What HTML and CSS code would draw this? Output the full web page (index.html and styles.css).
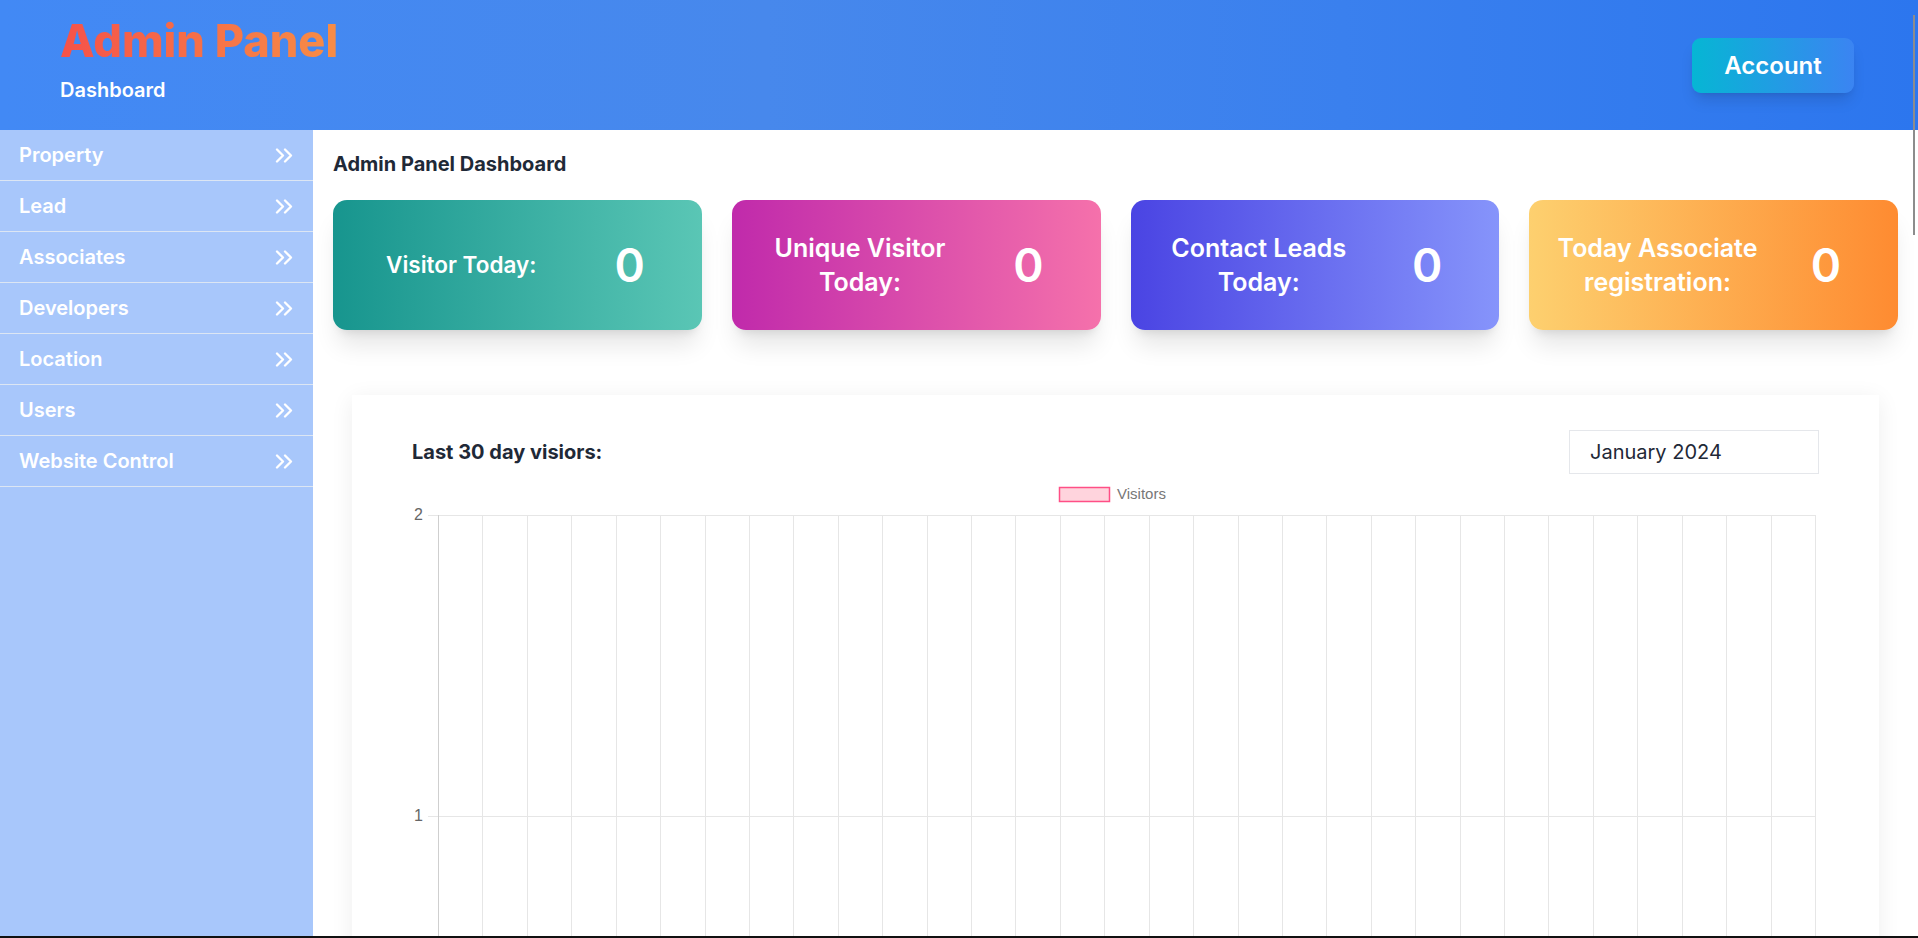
FILE: index.html
```html
<!DOCTYPE html>
<html lang="en">
<head>
<meta charset="utf-8">
<title>Admin Panel</title>
<link rel="stylesheet" href="styles.css">
</head>
<body>
<header class="topbar">
  <div class="brand">
    <h1 class="brand-title">Admin Panel</h1>
    <p class="brand-sub">Dashboard</p>
  </div>
  <button class="account-btn">Account</button>
</header>
<div class="layout">
  <nav class="sidebar">
    <a class="nav-item"><span>Property</span><svg class="chev" viewBox="0 0 18 15"><path d="M2 1.5l6 6-6 6M10 1.5l6 6-6 6"/></svg></a>
    <a class="nav-item"><span>Lead</span><svg class="chev" viewBox="0 0 18 15"><path d="M2 1.5l6 6-6 6M10 1.5l6 6-6 6"/></svg></a>
    <a class="nav-item"><span>Associates</span><svg class="chev" viewBox="0 0 18 15"><path d="M2 1.5l6 6-6 6M10 1.5l6 6-6 6"/></svg></a>
    <a class="nav-item"><span>Developers</span><svg class="chev" viewBox="0 0 18 15"><path d="M2 1.5l6 6-6 6M10 1.5l6 6-6 6"/></svg></a>
    <a class="nav-item"><span>Location</span><svg class="chev" viewBox="0 0 18 15"><path d="M2 1.5l6 6-6 6M10 1.5l6 6-6 6"/></svg></a>
    <a class="nav-item"><span>Users</span><svg class="chev" viewBox="0 0 18 15"><path d="M2 1.5l6 6-6 6M10 1.5l6 6-6 6"/></svg></a>
    <a class="nav-item"><span>Website Control</span><svg class="chev" viewBox="0 0 18 15"><path d="M2 1.5l6 6-6 6M10 1.5l6 6-6 6"/></svg></a>
  </nav>
  <main class="main">
    <h2 class="page-title">Admin Panel Dashboard</h2>
    <section class="stats">
      <div class="stat stat-teal"><div class="stat-label stat-label-sm">Visitor Today:</div><div class="stat-value">0</div></div>
      <div class="stat stat-pink"><div class="stat-label">Unique Visitor Today:</div><div class="stat-value">0</div></div>
      <div class="stat stat-indigo"><div class="stat-label">Contact Leads Today:</div><div class="stat-value">0</div></div>
      <div class="stat stat-orange"><div class="stat-label">Today Associate registration:</div><div class="stat-value">0</div></div>
    </section>
    <section class="chart-card">
      <div class="chart-head">
        <h3 class="chart-title">Last 30 day visiors:</h3>
        <div class="month-input">January 2024</div>
      </div>
      <svg class="chart" width="1407" height="680" viewBox="0 0 1407 680">
        <g class="vgrid" id="vgrid"></g>
        <g class="hgrid">
          <line x1="16" y1="35.5" x2="1403" y2="35.5"/>
          <line x1="16" y1="336.5" x2="1403" y2="336.5"/>
          <line x1="16" y1="637.5" x2="1403" y2="637.5"/>
        </g>
        <line class="axis" x1="26.5" y1="35" x2="26.5" y2="680"/>
        <g class="ticks">
          <text x="11" y="40">2</text>
          <text x="11" y="341">1</text>
        </g>
        <rect class="legend-box" x="647.5" y="7.5" width="50" height="14"/>
        <text class="legend-text" x="705" y="19">Visitors</text>
      </svg>
    </section>
  </main>
</div>
<div class="scroll-thumb"></div>
<div class="bottom-line"></div>
<script src="chart.js"></script>
</body>
</html>
```
FILE: chart.js
```js
(function () {
  var g = document.getElementById('vgrid');
  var ns = 'http://www.w3.org/2000/svg';
  var left = 26, right = 1403, n = 31;
  var step = (right - left) / n;
  for (var i = 0; i <= n; i++) {
    var x = Math.round(left + i * step) + 0.5;
    var l = document.createElementNS(ns, 'line');
    l.setAttribute('x1', x);
    l.setAttribute('x2', x);
    l.setAttribute('y1', 35);
    l.setAttribute('y2', 680);
    g.appendChild(l);
  }
})();
```
FILE: styles.css
```css
* { box-sizing: border-box; }
html, body { margin: 0; padding: 0; height: 100%; }
body {
  font-family: Inter, "Noto Sans", sans-serif;
  color: #1f2937;
  background: #fff;
  overflow: hidden;
  display: flex;
  flex-direction: column;
}
.topbar {
  height: 130px;
  flex: 0 0 130px;
  display: flex;
  align-items: center;
  justify-content: space-between;
  padding: 0 64px 0 60px;
  background: linear-gradient(to right, #4289f5 0%, #4788ec 40%, #3a80ee 70%, #2c76ee 100%);
}
.brand { align-self: flex-start; padding-top: 13px; }
.brand-title {
  display: inline-block;
  margin: 0;
  font-size: 45px;
  line-height: 56px;
  font-weight: 800;
  background: linear-gradient(to right, #f5524a, #f78d46);
  -webkit-background-clip: text;
  background-clip: text;
  color: transparent;
}
.brand-sub {
  margin: 7px 0 0;
  font-size: 20px;
  line-height: 28px;
  font-weight: 600;
  color: #fff;
}
.account-btn {
  width: 162px;
  height: 55px;
  border: 0;
  border-radius: 9px;
  background: linear-gradient(to right, #06b6d4, #3b84f2);
  color: #fff;
  font-family: inherit;
  font-size: 24px;
  font-weight: 600;
  box-shadow: 0 10px 15px -3px rgba(0,0,0,0.12), 0 4px 6px -4px rgba(0,0,0,0.1);
}
.layout { flex: 1; display: flex; min-height: 0; }
.sidebar {
  width: 313px;
  flex: 0 0 313px;
  background: #a8c7fb;
}
.nav-item {
  display: flex;
  align-items: center;
  justify-content: space-between;
  height: 51px;
  padding: 0 20px 0 19px;
  border-bottom: 1px solid #dce6f3;
  color: #fff;
  font-size: 20px;
  font-weight: 600;
}
.chev {
  width: 18px;
  height: 15px;
  fill: none;
  stroke: #fff;
  stroke-width: 2.3;
  stroke-linecap: round;
  stroke-linejoin: round;
}
.main {
  flex: 1;
  padding: 20px 20px 0;
  min-width: 0;
}
.page-title {
  margin: 0;
  font-size: 20px;
  line-height: 28px;
  font-weight: 700;
  color: #1f2937;
}
.stats {
  display: grid;
  grid-template-columns: repeat(4, 1fr);
  gap: 30px;
  margin-top: 22px;
}
.stat {
  height: 130px;
  border-radius: 14px;
  display: flex;
  align-items: center;
  padding: 0 16px;
  color: #fff;
  box-shadow: 0 20px 25px -5px rgba(0,0,0,0.1), 0 8px 10px -6px rgba(0,0,0,0.1);
}
.stat-label {
  width: 66.667%;
  text-align: center;
  font-size: 25px;
  line-height: 34px;
  font-weight: 600;
}
.stat-label-sm { font-size: 22.5px; }
.stat-value {
  width: 33.333%;
  text-align: center;
  font-size: 46px;
  line-height: 1;
  font-weight: 600;
}
.stat-teal { background: linear-gradient(to right, #17958e, #5ac6b5); }
.stat-pink { background: linear-gradient(to right, #c02aab, #f571ab); }
.stat-indigo { background: linear-gradient(to right, #4a44e3, #8694fb); }
.stat-orange { background: linear-gradient(to right, #fdd06f, #fe8b31); }
.chart-card {
  margin: 65px 19px 0;
  padding: 35px 60px 0;
  background: #fff;
  box-shadow: 0 4px 22px rgba(0,0,0,0.07);
  height: 700px;
}
.chart-head {
  display: flex;
  align-items: center;
  justify-content: space-between;
  height: 44px;
}
.chart-title {
  margin: 0;
  font-size: 20px;
  font-weight: 700;
  color: #1f2937;
}
.month-input {
  width: 250px;
  height: 44px;
  border: 1px solid #e5e7eb;
  padding: 0 20px;
  display: flex;
  align-items: center;
  font-size: 20px;
  color: #1f2937;
}
.chart { display: block; margin-top: 6px; }
.vgrid line, .hgrid line { stroke: #e6e6e6; stroke-width: 1; }
.axis { stroke: #cfcfcf; stroke-width: 1; }
.ticks text {
  font-family: "Liberation Sans", Arial, sans-serif;
  font-size: 16px;
  fill: #666;
  text-anchor: end;
}
.legend-box { fill: rgba(255,99,132,0.28); stroke: #ff4f86; stroke-width: 1.5; }
.legend-text {
  font-family: "Liberation Sans", Arial, sans-serif;
  font-size: 15px;
  fill: #777;
}
.scroll-thumb {
  position: fixed;
  top: 15px;
  right: 3px;
  width: 2px;
  height: 220px;
  background: #8c8c8c;
}
.bottom-line {
  position: fixed;
  left: 0;
  right: 0;
  bottom: 0;
  height: 2px;
  background: #111;
}
```
